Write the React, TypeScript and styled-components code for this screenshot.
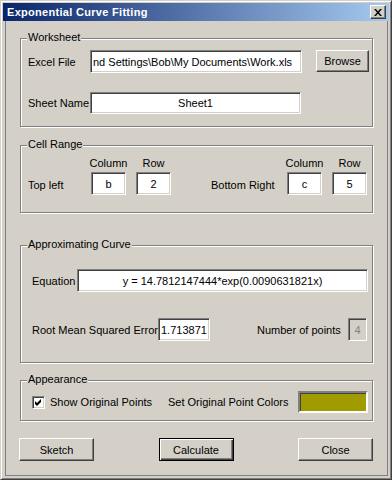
import React from "react";
import styled, { createGlobalStyle, css } from "styled-components";

const GlobalStyle = createGlobalStyle`
  html, body {
    margin: 0;
    padding: 0;
    background: #fff;
  }
  body {
    font-family: "Liberation Sans", Arial, sans-serif;
    font-size: 11px;
    color: #000;
  }
`;

const Window = styled.div`
  box-sizing: border-box;
  width: 392px;
  height: 480px;
  padding: 2px;
  display: flex;
  flex-direction: column;
  background: #d4d0c8;
  border: 1px solid;
  border-color: #d4d0c8 #404040 #404040 #d4d0c8;
  box-shadow: inset 1px 1px #fff, inset -1px -1px #808080;
`;

const TitleBar = styled.div`
  flex: 0 0 18px;
  display: flex;
  align-items: center;
  justify-content: space-between;
  padding: 0 3px 0 4px;
  background: linear-gradient(to right, #0a246a, #a6caf0);
`;

const Title = styled.span`
  color: #fff;
  font-weight: bold;
  font-size: 11px;
  letter-spacing: 0.3px;
`;

const CloseBox = styled.div`
  box-sizing: border-box;
  width: 16px;
  height: 14px;
  display: flex;
  align-items: center;
  justify-content: center;
  background: #d4d0c8;
  border: 1px solid;
  border-color: #fff #404040 #404040 #fff;
  box-shadow: inset -1px -1px #808080;
`;

const Client = styled.div`
  flex: 1;
  display: flex;
  flex-direction: column;
  margin: 0 1px 1px 2px;
  padding: 17px 14px 0 14px;
  border: 1px solid #808080;
  border-top: none;
`;

const Group = styled.div<{ $h: number; $mb: number }>`
  position: relative;
  box-sizing: border-box;
  height: ${(p) => p.$h}px;
  margin-bottom: ${(p) => p.$mb}px;
  border: 1px solid #808080;
  box-shadow: inset 1px 1px #fff, 1px 1px #fff;
`;

const Caption = styled.span`
  position: absolute;
  top: -8px;
  left: 6px;
  padding: 0 1px;
  line-height: 13px;
  background: #d4d0c8;
`;

const Label = styled.span<{ $w?: number; $pl?: number; $pt?: number }>`
  white-space: nowrap;
  ${(p) => p.$w !== undefined && css`width: ${p.$w}px; flex: none;`}
  ${(p) => p.$pl !== undefined && css`padding-left: ${p.$pl}px;`}
  ${(p) => p.$pt !== undefined && css`padding-top: ${p.$pt}px;`}
`;

const Field = styled.input<{ $w: number; $h?: number; $align?: string; $off?: boolean }>`
  box-sizing: border-box;
  width: ${(p) => p.$w}px;
  height: ${(p) => p.$h ?? 23}px;
  margin: 0;
  padding: 0 2px;
  font: 11px "Liberation Sans", Arial, sans-serif;
  color: ${(p) => (p.$off ? "#808080" : "#000")};
  background: ${(p) => (p.$off ? "#d4d0c8" : "#fff")};
  text-align: ${(p) => p.$align ?? "left"};
  border: 1px solid;
  border-color: #808080 #fff #fff #808080;
  box-shadow: inset 1px 1px #404040, inset -1px -1px #d4d0c8;
  outline: none;
  flex: none;
`;

const Button = styled.button<{ $w?: number; $h?: number; $default?: boolean }>`
  box-sizing: border-box;
  width: ${(p) => p.$w ?? 75}px;
  height: ${(p) => p.$h ?? 23}px;
  margin: 0;
  padding: 0;
  font: 11px "Liberation Sans", Arial, sans-serif;
  color: #000;
  background: #d4d0c8;
  border: 1px solid;
  border-color: #fff #404040 #404040 #fff;
  box-shadow: inset -1px -1px #808080;
  ${(p) =>
    p.$default &&
    css`
      border-color: #000;
      box-shadow: inset 1px 1px #fff, inset -1px -1px #404040, inset -2px -2px #808080;
    `}
`;

const WorksheetGrid = styled.div`
  display: grid;
  grid-template-columns: 62px 226px 53px;
  grid-template-rows: 23px 23px;
  row-gap: 18px;
  align-items: center;
  padding: 11px 0 0 7px;

  & > button {
    align-self: start;
  }
`;

const RangeGrid = styled.div`
  display: grid;
  grid-template-columns: 53px 35px 35px 96px 35px 35px;
  grid-template-rows: 14px 23px;
  column-gap: 10px;
  row-gap: 2px;
  align-items: center;
  padding: 10px 0 0 7px;

  & > :nth-child(n + 5) {
    grid-row: 2;
  }
`;

const ColHead = styled.span<{ $col: number }>`
  grid-column: ${(p) => p.$col};
  grid-row: 1;
  justify-self: center;
  line-height: 14px;
`;

const CurveBody = styled.div`
  display: flex;
  flex-direction: column;
  gap: 26px;
  padding: 23px 0 0 11px;
`;

const Row = styled.div`
  display: flex;
  align-items: center;
`;

const AppearanceRow = styled.div`
  display: flex;
  align-items: center;
  height: 22px;
  padding: 10px 0 0 11px;
`;

const CheckBox = styled.span`
  box-sizing: border-box;
  width: 13px;
  height: 13px;
  flex: none;
  display: flex;
  align-items: center;
  justify-content: center;
  margin-right: 5px;
  background: #fff;
  border: 1px solid;
  border-color: #808080 #fff #fff #808080;
  box-shadow: inset 1px 1px #404040, inset -1px -1px #d4d0c8;
`;

const Swatch = styled.div<{ $color: string }>`
  box-sizing: border-box;
  width: 70px;
  height: 22px;
  flex: none;
  background: ${(p) => p.$color};
  border: 2px solid;
  border-color: #808080 #fff #fff #808080;
  box-shadow: inset 1px 1px #404040;
`;

const ButtonRow = styled.div`
  display: flex;
  justify-content: space-between;
  margin-left: -1px;
`;

const App: React.FC = () => {
  return (
    <>
      <GlobalStyle />
      <Window>
        <TitleBar>
          <Title>Exponential Curve Fitting</Title>
          <CloseBox>
            <svg width="8" height="7" viewBox="0 0 8 7">
              <path d="M0 0h2l2 2.5 2-2.5h2l-3 3.5 3 3.5h-2l-2-2.5-2 2.5h-2l3-3.5z" fill="#000" />
            </svg>
          </CloseBox>
        </TitleBar>

        <Client>
          <Group $h={89} $mb={18}>
            <Caption>Worksheet</Caption>
            <WorksheetGrid>
              <Label>Excel File</Label>
              <Field $w={212} readOnly defaultValue={"nd Settings\\Bob\\My Documents\\Work.xls"} />
              <Button $w={53} $h={22}>Browse</Button>
              <Label>Sheet Name</Label>
              <Field $w={211} $h={22} $align="center" readOnly defaultValue="Sheet1" />
            </WorksheetGrid>
          </Group>

          <Group $h={68} $mb={32}>
            <Caption>Cell Range</Caption>
            <RangeGrid>
              <ColHead $col={2}>Column</ColHead>
              <ColHead $col={3}>Row</ColHead>
              <ColHead $col={5}>Column</ColHead>
              <ColHead $col={6}>Row</ColHead>
              <Label $pt={2}>Top left</Label>
              <Field $w={35} $align="center" readOnly defaultValue="b" />
              <Field $w={35} $align="center" readOnly defaultValue="2" />
              <Label $pl={30} $pt={2}>Bottom Right</Label>
              <Field $w={35} $align="center" readOnly defaultValue="c" />
              <Field $w={35} $align="center" readOnly defaultValue="5" />
            </RangeGrid>
          </Group>

          <Group $h={118} $mb={17}>
            <Caption>Approximating Curve</Caption>
            <CurveBody>
              <Row>
                <Label $w={45}>Equation</Label>
                <Field $w={291} $align="center" readOnly defaultValue="y = 14.7812147444*exp(0.0090631821x)" />
              </Row>
              <Row>
                <Label $w={126}>Root Mean Squared Error</Label>
                <Field $w={52} readOnly defaultValue="1.713871" />
                <Label $w={91} style={{ marginLeft: 47 }}>Number of points</Label>
                <Field $w={19} $align="center" $off readOnly defaultValue="4" />
              </Row>
            </CurveBody>
          </Group>

          <Group $h={41} $mb={17}>
            <Caption>Appearance</Caption>
            <AppearanceRow>
              <CheckBox>
                <svg width="7" height="7" viewBox="0 0 7 7">
                  <path d="M0 2L2 4L6 0V3L2 7L0 5Z" fill="#000" />
                </svg>
              </CheckBox>
              <Label $w={118}>Show Original Points</Label>
              <Label $w={130}>Set Original Point Colors</Label>
              <Swatch $color="#a09c00" />
            </AppearanceRow>
          </Group>

          <ButtonRow>
            <Button>Sketch</Button>
            <Button $default>Calculate</Button>
            <Button>Close</Button>
          </ButtonRow>
        </Client>
      </Window>
    </>
  );
};

export default App;
